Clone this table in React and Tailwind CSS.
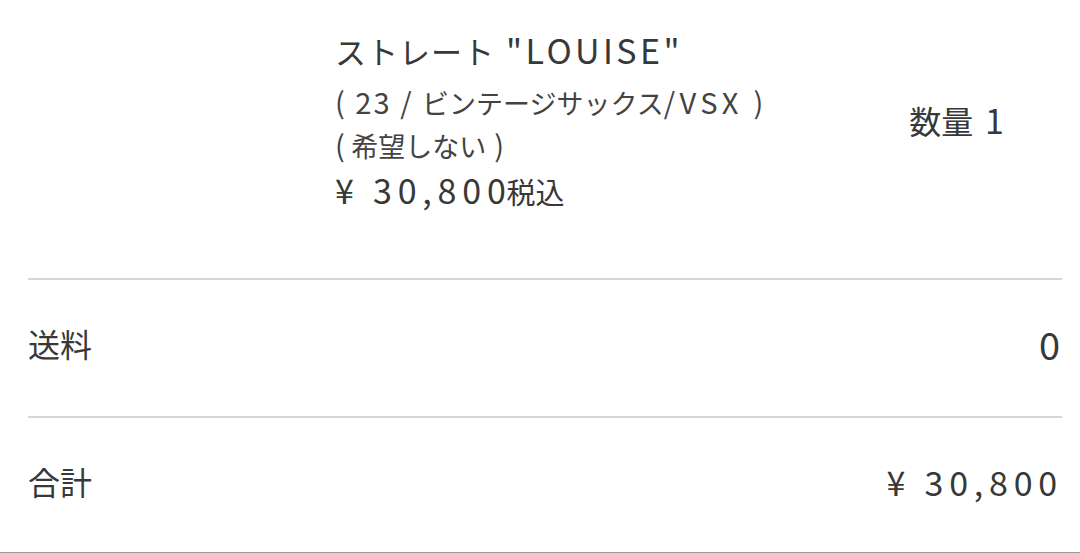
export default function App() {
    const font = { fontFamily: '"Noto Sans CJK JP", "Noto Sans", sans-serif' }

    return (
        <div style={font} className="w-[1080px] h-[553px] bg-white text-[#383838] flex flex-col overflow-hidden">
            {/* Item */}
            <div className="h-[278px] flex items-start pl-[335px] pr-[76px] pt-[27px]">
                <div className="flex-1 flex flex-col">
                    <p className="text-[31px] leading-[46px] tracking-[1px] whitespace-nowrap">
                        ストレート<span className="text-[34px] tracking-[0.1em]"> "LOUISE"</span>
                    </p>
                    <p className="text-[27px] leading-[50px] mt-[2px] text-[#434343] whitespace-nowrap">
                        <span className="text-[29px] tracking-[0.07em]">( 23 / </span>
                        ビンテージサックス
                        <span className="text-[29px] tracking-[0.15em]">/VSX )</span>
                    </p>
                    <p className="text-[27px] leading-[40px] mt-[-4px] text-[#434343] whitespace-nowrap">
                        <span className="text-[29px]">( </span>
                        希望しない
                        <span className="text-[29px] tracking-[0.05em]"> )</span>
                    </p>
                    <p className="text-[29px] leading-[48px] whitespace-nowrap">
                        <span className="text-[34px] tracking-[0.17em] mr-[-5px]">¥ 30,800</span>税込
                    </p>
                </div>
                <p className="text-[32px] leading-[46px] mt-[70px] mr-[-4px] whitespace-nowrap">
                    数量<span className="text-[34px] tracking-[0.12em]"> 1</span>
                </p>
            </div>

            <div className="ml-[28px] mr-[18px] border-t-2 border-[#d6d6d6]" />

            {/* Shipping */}
            <div className="h-[136px] flex items-center justify-between ml-[28px] mr-[20px] pb-[10px]">
                <span className="text-[32px]">送料</span>
                <span className="text-[38px]">0</span>
            </div>

            <div className="ml-[28px] mr-[18px] border-t-2 border-[#d6d6d6]" />

            {/* Total */}
            <div className="flex-1 flex items-center justify-between ml-[28px] mr-[22px] pb-[8px]">
                <span className="text-[32px]">合計</span>
                <span className="text-[34px] tracking-[0.17em] mr-[-5px]">¥ 30,800</span>
            </div>

            <div className="border-t border-[#9a9a9a]" />
        </div>
    )
}
